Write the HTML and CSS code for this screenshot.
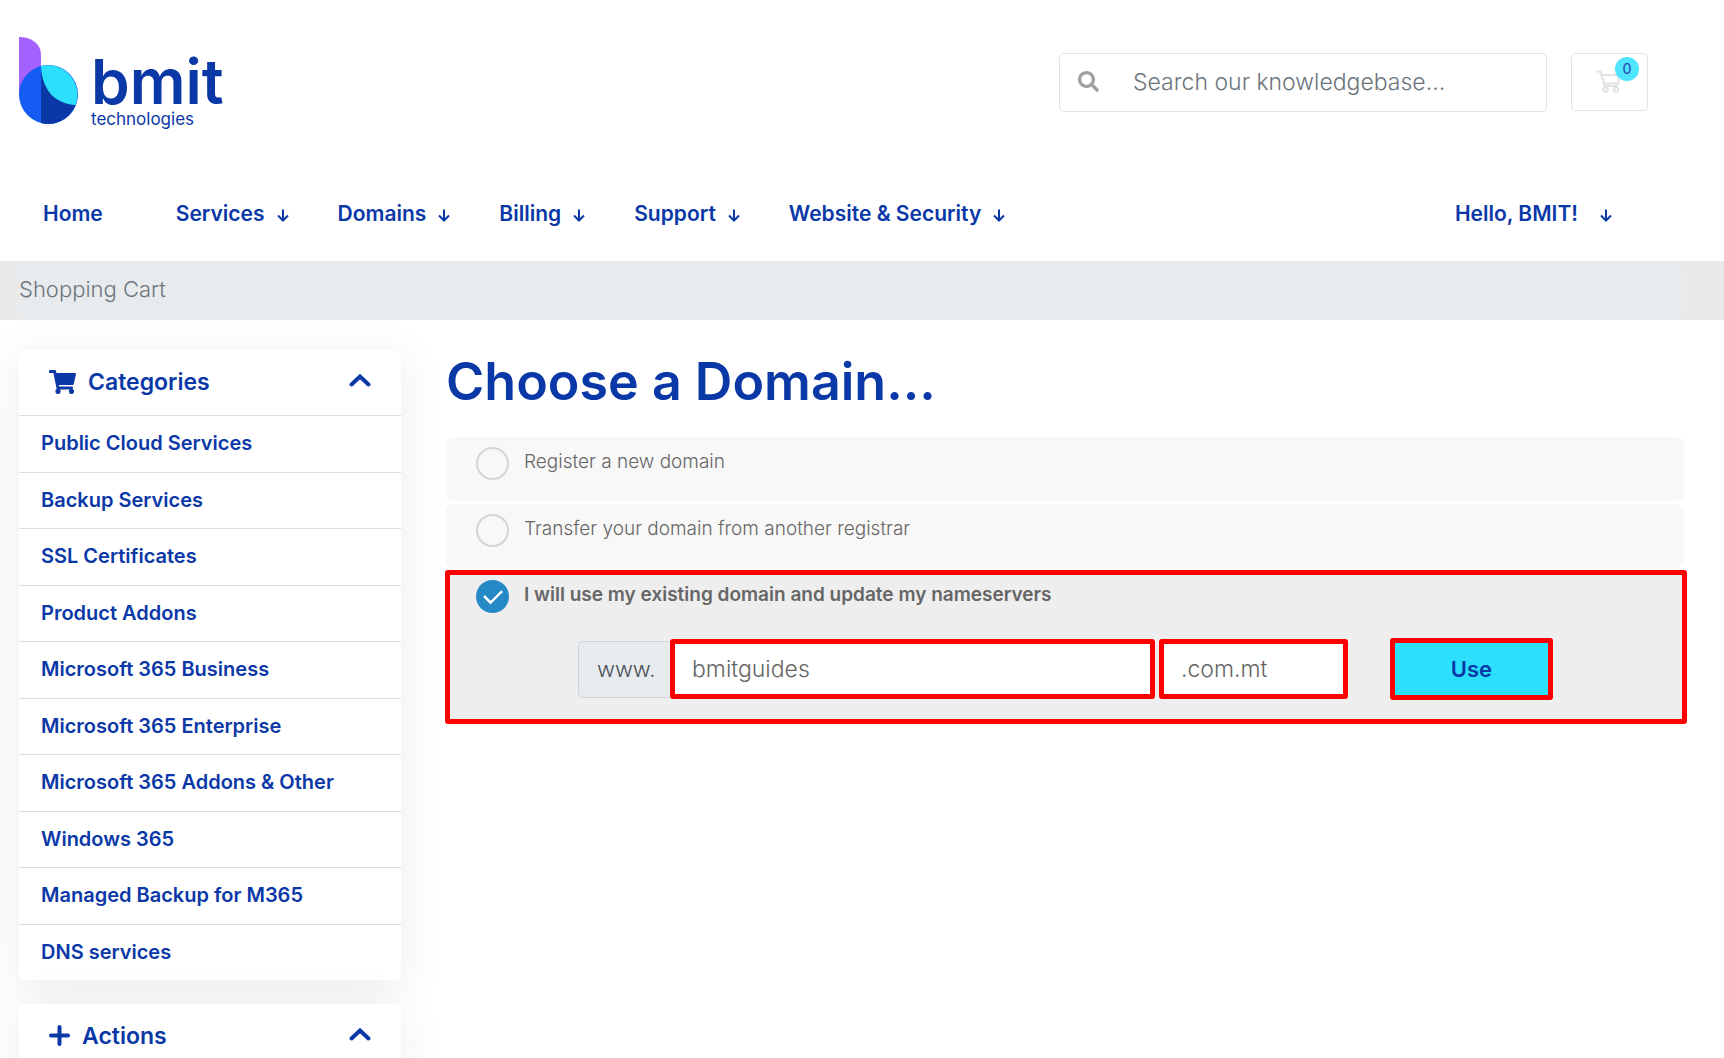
FILE: index.html
```html
<!DOCTYPE html>
<html lang="en">
<head>
<meta charset="utf-8">
<meta name="viewport" content="width=device-width, initial-scale=1">
<title>Shopping Cart - BMIT Technologies</title>
<link rel="stylesheet" href="styles.css">
</head>
<body>
<svg class="sprite" aria-hidden="true">
  <symbol id="arrow" viewBox="0 0 12 13"><path d="M6 0.5V11.5M1 6.5L6 11.5L11 6.5" fill="none" stroke="currentColor" stroke-width="2"/></symbol>
  <symbol id="chevron" viewBox="0 0 22 13"><path d="M2.500 10.500L11 2.500L19.500 10.500" fill="none" stroke="currentColor" stroke-width="4" stroke-linecap="round"/></symbol>
</svg>
<header>
  <div class="topbar">
    <a href="#" class="logo" aria-label="bmit technologies">
      <svg class="logo-mark" viewBox="0 0 59 87" aria-hidden="true">
        <path d="M0 0C13 0 22 7 22 18V58H0Z" fill="#a362ff"/>
        <circle cx="29.500" cy="57.500" r="29.500" fill="#145cf2"/>
        <path d="M22 29V86A29.500 29.500 0 0 0 56.500 68Z" fill="#0a38a7"/>
        <path d="M22 29A29.500 29.500 0 0 1 56.500 68C36 67 23 53 22 29Z" fill="#2bdffd"/>
      </svg>
      <span class="logo-text"><span class="logo-name">bmit</span><span class="logo-sub">technologies</span></span>
    </a>
    <form class="search" role="search">
      <button type="button" class="search-btn" aria-label="Search">
        <svg viewBox="0 0 512 512" width="21" height="21" aria-hidden="true"><path fill="currentColor" d="M505 442.700L405.300 343c-4.500-4.500-10.600-7-17-7H372c27.600-35.300 44-79.700 44-128C416 93.100 322.900 0 208 0S0 93.100 0 208s93.100 208 208 208c48.300 0 92.700-16.400 128-44v16.300c0 6.400 2.500 12.500 7 17l99.700 99.700c9.400 9.400 24.600 9.400 33.900 0l28.300-28.300c9.400-9.400 9.400-24.600.1-34zM208 336c-70.700 0-128-57.200-128-128 0-70.700 57.200-128 128-128 70.700 0 128 57.200 128 128 0 70.700-57.200 128-128 128z"/></svg>
      </button>
      <input type="text" placeholder="Search our knowledgebase..." aria-label="Search our knowledgebase">
    </form>
    <a href="#" class="cart" aria-label="Shopping cart">
      <svg viewBox="0 0 24 23" width="24" height="23" aria-hidden="true"><path d="M0.500 1.500H4.500L8.500 16H22M5.500 5H22.500V13.500H7.500" fill="none" stroke="currentColor" stroke-width="2"/><circle cx="9.500" cy="19.500" r="2.200" fill="none" stroke="currentColor" stroke-width="2"/><circle cx="20" cy="19.500" r="2.200" fill="none" stroke="currentColor" stroke-width="2"/></svg>
      <span class="badge">0</span>
    </a>
  </div>
  <nav class="nav">
    <a href="#" class="home">Home</a>
    <a href="#">Services <svg><use href="#arrow"/></svg></a>
    <a href="#">Domains <svg><use href="#arrow"/></svg></a>
    <a href="#">Billing <svg><use href="#arrow"/></svg></a>
    <a href="#">Support <svg><use href="#arrow"/></svg></a>
    <a href="#">Website &amp; Security <svg><use href="#arrow"/></svg></a>
    <a href="#" class="account">Hello, BMIT! <svg><use href="#arrow"/></svg></a>
  </nav>
</header>
<div class="crumbs"><div class="crumbs-inner">Shopping Cart</div></div>
<div class="page">
  <aside>
    <section class="card">
      <h2><svg viewBox="0 0 576 512" width="27" height="24" aria-hidden="true"><path fill="currentColor" d="M528.100 301.300l47.300-208C578.800 78.300 567.400 64 552 64H159.200l-9.200-44.800C147.800 8 137.900 0 126.500 0H24C10.700 0 0 10.700 0 24v16c0 13.300 10.700 24 24 24h69.900l70.200 343.400C147.300 417.100 136 435.200 136 456c0 30.900 25.100 56 56 56s56-25.100 56-56c0-15.700-6.400-29.800-16.800-40h209.600C430.400 426.200 424 440.300 424 456c0 30.900 25.100 56 56 56s56-25.100 56-56c0-22.200-12.900-41.300-31.600-50.400l5.500-24.300c3.400-15-8-29.300-23.400-29.300H218.100l-6.500-32h293.100c11.200 0 20.900-7.800 23.400-18.700z"/></svg>Categories<svg class="chev"><use href="#chevron"/></svg></h2>
      <ul>
        <li><a href="#">Public Cloud Services</a></li>
        <li><a href="#">Backup Services</a></li>
        <li><a href="#">SSL Certificates</a></li>
        <li><a href="#">Product Addons</a></li>
        <li><a href="#">Microsoft 365 Business</a></li>
        <li><a href="#">Microsoft 365 Enterprise</a></li>
        <li><a href="#">Microsoft 365 Addons &amp; Other</a></li>
        <li><a href="#">Windows 365</a></li>
        <li><a href="#">Managed Backup for M365</a></li>
        <li><a href="#">DNS services</a></li>
      </ul>
    </section>
    <section class="card">
      <h2><svg viewBox="0 0 21 21" width="21" height="21" aria-hidden="true"><path d="M10.500 2V19M2 10.500H19" stroke="currentColor" stroke-width="4" stroke-linecap="round"/></svg>Actions<svg class="chev"><use href="#chevron"/></svg></h2>
    </section>
  </aside>
  <main>
    <h1>Choose a Domain...</h1>
    <form class="options">
      <div class="option"><label><input type="radio" name="domain">Register a new domain</label></div>
      <div class="option"><label><input type="radio" name="domain">Transfer your domain from another registrar</label></div>
      <div class="option selected">
        <label><input type="radio" name="domain" checked>I will use my existing domain and update my nameservers</label>
        <div class="domain-row">
          <span class="prefix">www.</span>
          <input type="text" class="sld" value="bmitguides" aria-label="Domain name">
          <input type="text" class="tld" value=".com.mt" aria-label="Domain extension">
          <button type="button" class="use">Use</button>
        </div>
      </div>
    </form>
  </main>
</div>
</body>
</html>
```
FILE: styles.css
```css
* { box-sizing: border-box; }
body {
  margin: 0;
  background: #fff;
  color: #5f6368;
  font-family: Inter, "Liberation Sans", sans-serif;
  font-size: 22px;
  font-weight: 300;
  overflow-x: hidden;
}
a { color: #0a38a7; text-decoration: none; }
input, button { font: inherit; color: inherit; }
.sprite { position: absolute; width: 0; height: 0; }

.topbar { display: flex; align-items: flex-start; padding: 37px 76px 0 19px; min-height: 165px; }
.logo { display: flex; gap: 13px; margin-right: auto; }
.logo-mark { width: 59px; height: 87px; }
.logo-text { display: flex; flex-direction: column; padding-top: 17px; }
.logo-name { font-size: 62px; font-weight: 600; line-height: 56px; }
.logo-sub { font-size: 17px; font-weight: 400; line-height: 18px; }
.search { display: flex; align-items: center; width: 488px; height: 59px; margin: 16px 24px 0 0; border: 1px solid #e2e2e2; border-radius: 5px; }
.search-btn { display: flex; padding: 0 0 2px 18px; border: 0; background: none; color: #a0a0a0; }
.search input { flex: 1; min-width: 0; margin-left: 34px; padding: 0 0 2px; border: 0; outline: 0; background: none; font-size: 23px; }
.search input::placeholder { color: #6c757d; opacity: 1; }
.cart { position: relative; display: flex; align-items: center; justify-content: center; width: 77px; height: 58px; margin-top: 16px; padding: 0 3px 2px 0; border: 1px solid #e2e2e2; border-radius: 5px; color: #e2e2e2; }
.badge { position: absolute; top: 3px; right: 8px; width: 24px; height: 24px; border-radius: 50%; background: #4fe5fd; color: #2b55b5; font-size: 14px; font-weight: 500; line-height: 24px; text-align: center; }

.nav { display: flex; align-items: center; gap: 49px; height: 96px; padding: 0 112px 0 43px; font-size: 21px; font-weight: 600; }
.nav a { display: flex; align-items: center; gap: 12px; white-space: nowrap; }
.nav svg { width: 12px; height: 13px; margin-top: 4px; }
.nav .home { margin-right: 24px; }
.nav .account { margin-left: auto; gap: 22px; }

.crumbs { padding: 0 40px 0 19px; background: #e9e9e9; }
.crumbs-inner { height: 59px; border-radius: 5px; background: #e7ebee; color: #6c757d; line-height: 56px; }

.page { display: flex; align-items: flex-start; gap: 45px; padding: 30px 40px 0 19px; }
aside { flex: none; width: 382px; }
.card { margin-bottom: 24px; border-radius: 5px; background: #fff; box-shadow: 0 8px 50px rgba(0, 0, 0, 0.08); }
.card h2 { display: flex; align-items: center; gap: 12px; margin: 0; height: 65px; padding: 0 30px 2px; color: #0a38a7; font-size: 23px; font-weight: 600; }
.card .chev { width: 22px; height: 13px; margin: 0 0 2px auto; }
.card ul { margin: 0; padding: 0; list-style: none; display: grid; grid-template-rows: repeat(10, 1fr); height: 565px; }
.card li { border-top: 1px solid #dbdfe0; }
.card li a { display: block; padding: 0 22px; font-size: 20px; font-weight: 600; line-height: 54px; }

main { flex: 1; min-width: 0; }
h1 { margin: 0 0 23px; color: #0a38a7; font-size: 52px; font-weight: 600; line-height: 64px; }
.option { min-height: 64px; margin-bottom: 3px; padding: 10px 30px; border-radius: 8px; background: #f8f8f8; }
.option label { display: flex; gap: 15px; color: #666; font-size: 19px; line-height: 30px; }
.option input[type="radio"] { appearance: none; display: grid; place-items: center; flex: none; width: 33px; height: 33px; margin: 0; border: 2px solid #d6d4ce; border-radius: 50%; }
.option input[type="radio"]:checked { border: 0; background: #2489c5; }
.option input[type="radio"]:checked::after { content: ""; width: 15px; height: 8px; margin-bottom: 5px; border: solid #fff; border-width: 0 0 3px 3px; border-radius: 1px; transform: rotate(-45deg); }
.selected { min-height: 154px; margin: -1px -3px 0 -1px; padding: 5px 28px 19px 26px; border: 5px solid #f00; border-radius: 3px; background: #eee; }
.selected label { font-weight: 600; }
.domain-row { display: flex; align-items: center; margin: 25px 101px 0 102px; }
.prefix { width: 92px; height: 57px; padding-left: 18px; border: 1px solid #ced4da; border-right: 0; border-radius: 5px 0 0 5px; background: #e7ebee; color: #495057; line-height: 55px; }
.domain-row input { height: 60px; padding: 0 17px; border: 5px solid #f00; border-radius: 3px; outline: 0; background: #fff; color: #666; font-size: 23px; }
.sld { flex: 1; min-width: 0; }
.tld { width: 189px; margin-left: 4px; }
.use { width: 163px; height: 62px; margin-left: 42px; border: 5px solid #f00; border-radius: 3px; background: #2bdffd; color: #0a38a7; font-weight: 600; }
```
